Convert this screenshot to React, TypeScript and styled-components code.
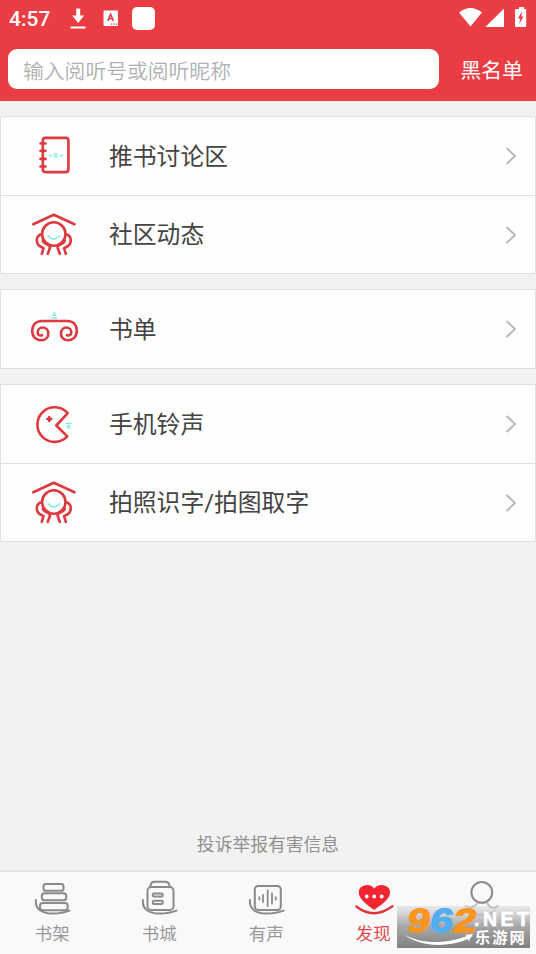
import React from "react";
import styled, { createGlobalStyle } from "styled-components";

const GlobalStyle = createGlobalStyle`
  * { box-sizing: border-box; }
  body { margin: 0; background: #f2f2f2; }
`;

const Screen = styled.div`
  position: relative;
  display: flex;
  flex-direction: column;
  width: 536px;
  height: 954px;
  overflow: hidden;
  background: #f2f2f2;
  font-family: Roboto, "Noto Sans CJK SC", sans-serif;
  font-weight: 400;
`;

const Header = styled.header`
  height: 101px;
  flex: none;
  background: #ea3d43;
`;

const StatusBar = styled.div`
  display: flex;
  justify-content: space-between;
  height: 38px;
  color: #fff;
`;

const StatusGroup = styled.div`
  display: flex;
`;

const Clock = styled.span`
  width: 60px;
  padding-left: 9px;
  font: 500 20.8px/38px Roboto, sans-serif;
  letter-spacing: 0.15px;
`;

const SearchBar = styled.div`
  display: flex;
  align-items: center;
  margin-top: 10.5px;
  padding-left: 8px;
  height: 40px;
`;

const SearchField = styled.input`
  width: 431px;
  height: 40px;
  padding: 2px 15px 0;
  border: 0;
  border-radius: 9px;
  outline: 0;
  background: #fff;
  font: 350 20.8px "Noto Sans CJK SC", sans-serif;
  &::placeholder { color: #b0b0b0; opacity: 1; }
`;

const BlacklistLink = styled.span`
  margin-left: 21.5px;
  padding-top: 4px;
  color: #fff;
  font-size: 20.8px;
  line-height: 38px;
  white-space: nowrap;
`;

const Content = styled.main`
  display: flex;
  flex: 1;
  flex-direction: column;
  padding-top: 15px;
`;

const Card = styled.section`
  margin-bottom: 15px;
  border: 1px solid #e0e0e0;
  background: #fefefe;
`;

const Row = styled.div`
  display: flex;
  align-items: center;
  height: 78px;
  padding-right: 18px;
  & + & {
    border-top: 1px solid #e0e0e0;
  }
`;

const RowIcon = styled.svg`
  width: 108px;
  height: 78px;
  flex: none;
  fill: none;
  stroke: #dd3a40;
  stroke-width: 2.6;
  stroke-linecap: round;
  stroke-linejoin: round;
`;

const RowLabel = styled.span`
  flex: 1;
  padding-top: 1px;
  color: #444;
  font-size: 23.8px;
  line-height: 34px;
`;

const Chevron = styled.svg`
  width: 12px;
  height: 20px;
  fill: none;
  stroke: #b8b8b8;
  stroke-width: 1.9;
`;

const Report = styled.div`
  margin-top: auto;
  padding-bottom: 12px;
  color: #909090;
  font-size: 17.8px;
  line-height: 26px;
  text-align: center;
`;

const TabBar = styled.nav`
  display: flex;
  flex: none;
  height: 84px;
  border-top: 2px solid #e4e4e4;
  background: #f9f9f9;
`;

const Tab = styled.div<{ $active?: boolean }>`
  display: flex;
  flex-direction: column;
  align-items: center;
  width: 107px;
  padding-right: 2.5px;
  color: ${(p) => (p.$active ? "#df4a50" : "#999")};
  font-size: 17.4px;
  font-weight: 400;
  line-height: 29px;
`;

const TabIcon = styled.svg<{ $active?: boolean }>`
  width: 44px;
  height: 48px;
  flex: none;
  margin-left: 2px;
  fill: none;
  stroke: ${(p) => (p.$active ? "#e9232c" : "#8a8a8a")};
  stroke-width: 2;
  stroke-linecap: round;
  stroke-linejoin: round;
`;

const Watermark = styled.svg`
  position: absolute;
  left: 397px;
  top: 894px;
  width: 139px;
  height: 60px;
`;

const TEAL = "#86eae1";

const Notebook = () => (
  <>
    <rect x="41.8" y="20.9" width="25.6" height="34.2" rx="2.5" />
    <path d="M39.5 26.5h5M39.5 33.8h5M39.5 41.9h5M39.5 49.5h5" />
    <path d="M48.5 38.6h2M53.2 37.4h3M53.2 39.8h3M59.5 38.6h2" stroke={TEAL} strokeWidth="1.6" />
  </>
);

const House = () => (
  <>
    <path d="M32.3 28.3 52.8 18.8 73.5 28.3" />
    <circle cx="52.8" cy="38" r="11.7" />
    <path d="M47.5 40Q52.8 46 58.3 40" stroke={TEAL} strokeWidth="1.8" />
    <path d="M39.5 38.5C34.3 41 35.2 47.5 38.5 50L42.5 52.2 40.8 57.8M41.8 44.5C43.5 49.5 49.8 47.8 49 51.8L46.8 57.8" />
    <path d="M66.1 38.5C71.3 41 70.4 47.5 67.1 50L63.1 52.2 64.8 57.8M63.8 44.5C62.1 49.5 55.8 47.8 56.6 51.8L58.8 57.8" />
  </>
);

const Scroll = () => (
  <>
    <path d="M53.2 31H41C34 31 31.2 36 31.2 41C31.2 47 35.3 50.3 40 50.3C44.8 50.3 47.3 47 47.3 43.4C47.3 39.7 44.6 37.5 41.7 37.5C38.7 37.5 36.7 39.5 36.7 42.2C36.7 44.8 38.7 46 41 45.2" />
    <path d="M53.2 31H66.4C73.4 31 75.8 36 75.8 41C75.8 47 71.7 50.3 67 50.3C62.2 50.3 60 47 60 43.4C60 39.7 62.4 37.5 65.3 37.5C68.3 37.5 70.3 39.5 70.3 42.2C70.3 44.8 68.3 46 66 45.2" />
    <path d="M53.3 22.3v1.4M52.1 25.1h2.6M51.4 27.8h4" stroke={TEAL} strokeWidth="1.7" />
  </>
);

const Pacman = () => (
  <>
    <path d="M66.7 28.2A17.3 17.3 0 1 0 66.3 51.4L55.3 40.5Z" />
    <path d="M48.3 32v4M46.3 34h4" strokeWidth="2.5" />
    <path d="M65.4 38.5h4.5M66 41h3.4M66.5 43h2" stroke={TEAL} strokeWidth="1.6" />
  </>
);

const SWOOSH = "M4.9 28C4 38 12 41.4 21 41.5Q31 41.6 38.5 38.6";

const Books = () => (
  <>
    <rect x="12.5" y="12" width="20" height="6.8" rx="2.4" />
    <rect x="10.8" y="21.3" width="24.5" height="7" rx="2.7" />
    <rect x="9" y="31.1" width="27.7" height="7.2" rx="2.8" />
    <path d={SWOOSH} />
  </>
);

const Store = () => (
  <>
    <rect x="9.5" y="15.1" width="26" height="22.8" rx="3.5" />
    <path d="M12.5 14.8V13Q13.3 9.8 16.3 9.8H27.5Q30.5 9.8 31.5 13V14.8" />
    <rect x="14.8" y="21.4" width="10" height="3.1" rx="1.2" />
    <rect x="14.8" y="28.8" width="10" height="3.2" rx="1.2" />
    <path d={SWOOSH} />
  </>
);

const Audio = () => (
  <>
    <rect x="9.8" y="14" width="26" height="24" rx="3.5" />
    <path d="M14.4 25.2v2.4M18 23v7M22.7 18.5v15.5M27 21.5v10M30.7 25.2v2.4" strokeWidth="1.8" />
    <path d={SWOOSH} />
  </>
);

const Heart = () => (
  <>
    <path d="M22.2 36.8C16 32.2 7.8 26.5 7.8 20.5C7.8 13.5 17.5 11.5 22.2 18C27 11.5 37 13.5 37 20.5C37 26.5 28.5 32.2 22.2 36.8Z" fill="#f22630" stroke="#f22630" />
    <path d="M14.7 24.5h.01M22.2 24.5h.01M29.7 24.5h.01" stroke="#fff" strokeWidth="3.8" />
    <path d="M4.3 34.5Q21.8 48 40.4 34.3" stroke="#df353c" strokeWidth="2.3" />
  </>
);

const Person = () => (
  <>
    <circle cx="22.8" cy="20.4" r="10.4" />
    <path d="M18.5 31C16 35 11 36.5 6.5 34M28 31C30 35 35 38 38.5 34M8 39C15 44 30 44 36 39" stroke="#bdbdbd" />
  </>
);

const groups = [
  [
    { label: "推书讨论区", Icon: Notebook },
    { label: "社区动态", Icon: House },
  ],
  [{ label: "书单", Icon: Scroll }],
  [
    { label: "手机铃声", Icon: Pacman },
    { label: "拍照识字/拍图取字", Icon: House },
  ],
];

const tabs = [
  { label: "书架", Icon: Books },
  { label: "书城", Icon: Store },
  { label: "有声", Icon: Audio },
  { label: "发现", Icon: Heart, active: true },
  { label: "我的", Icon: Person },
];

const digits = [
  { char: "9", x: 9, fill: "#f8951f" },
  { char: "6", x: 32, fill: "#51aef0" },
  { char: "2", x: 55.5, fill: "#f8951f" },
];

export default function App() {
  return (
    <Screen>
      <GlobalStyle />
      <Header>
        <StatusBar>
          <StatusGroup>
            <Clock>4:57</Clock>
            <svg width="110" height="38" fill="#fff">
              <path d="M16.2 8.5h4v7h4L18.2 23l-6-7.5h4zM10.5 26.6h15v1.8h-15z" />
              <rect x="43.5" y="10.5" width="14.5" height="15.5" rx="1.2" />
              <path d="M47.7 21 50.6 14.2 53.5 21M48.8 18.8h3.6" fill="none" stroke="#ea3d43" strokeWidth="1.6" />
              <path d="M51 24.2h6" stroke="#ea3d43" strokeWidth="1.2" strokeDasharray="1.2 1.2" />
              <rect x="72" y="7" width="23" height="23" rx="5" />
            </svg>
          </StatusGroup>
          <svg width="80" height="38" fill="#fff">
            <path d="M3 12.5Q14.3 3.5 26 12.5L14.5 26.5Z" />
            <path d="M29.3 27 48 8.5V27z" />
            <path d="M60.5 9H63V7h5v2h2.2Q70.2 9 70.2 10V26Q70.2 27 69.2 27H60Q59 27 59 26V10Q59 9 60.5 9z" />
            <path d="M66 11 62 18.5h2.2L63.2 24l4.3-7.5h-2.2z" fill="#ea3d43" />
          </svg>
        </StatusBar>
        <SearchBar>
          <SearchField placeholder="输入阅听号或阅听昵称" />
          <BlacklistLink>黑名单</BlacklistLink>
        </SearchBar>
      </Header>
      <Content>
        {groups.map((rows, i) => (
          <Card key={i}>
            {rows.map(({ label, Icon }) => (
              <Row key={label}>
                <RowIcon viewBox="0 0 108 78"><Icon /></RowIcon>
                <RowLabel>{label}</RowLabel>
                <Chevron viewBox="0 0 12 20"><path d="M1.5 2 10 10 1.5 18" /></Chevron>
              </Row>
            ))}
          </Card>
        ))}
        <Report>投诉举报有害信息</Report>
      </Content>
      <TabBar>
        {tabs.map(({ label, Icon, active }) => (
          <Tab key={label} $active={active}>
            <TabIcon viewBox="0 0 44 48" $active={active}><Icon /></TabIcon>
            {label}
          </Tab>
        ))}
      </TabBar>
      <Watermark viewBox="0 -12 139 60">
        <defs>
          <linearGradient id="plate" x1="0" y1="0" x2="0" y2="1">
            <stop offset="0" stopColor="#ccc" stopOpacity="0.4" />
            <stop offset="0.45" stopColor="#a0a0a0" stopOpacity="0.88" />
            <stop offset="1" stopColor="#7c7c7c" stopOpacity="0.97" />
          </linearGradient>
        </defs>
        <rect width="133" height="42" fill="url(#plate)" />
        {digits.map(({ char, x, fill }) => (
          <g key={char} transform={`translate(${x} 25.5) skewX(-9)`}>
            <text
              fill={fill}
              stroke={fill}
              strokeWidth="1.3"
              fontFamily="Liberation Sans"
              fontWeight="700"
              fontSize="33.5"
              textLength="22.5"
              lengthAdjust="spacingAndGlyphs"
            >
              {char}
            </text>
          </g>
        ))}
        <path d="M7 28.5C24 38 48 38.5 70 30L68 28.8 76 28 71.5 35.5 71 33C48 42.5 23 40.5 7 28.5Z" fill="#fff" />
        <text x="77" y="19.7" fill="#fff" stroke="#fff" strokeWidth="0.6" fontFamily="Liberation Sans" fontWeight="700" fontSize="19.5" textLength="55" lengthAdjust="spacing">.NET</text>
        <text x="78" y="37" fill="#fff" fontFamily="Noto Sans CJK SC" fontWeight="700" fontSize="15.2" letterSpacing="2">乐游网</text>
      </Watermark>
    </Screen>
  );
}
